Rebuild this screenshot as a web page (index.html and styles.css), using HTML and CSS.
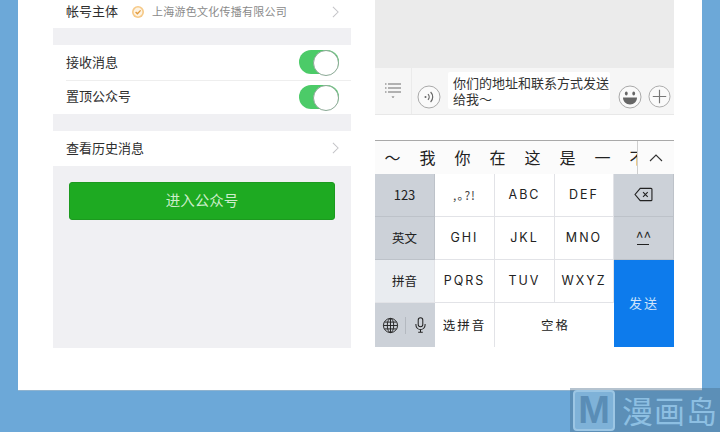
FILE: index.html
```html
<!DOCTYPE html>
<html lang="zh-CN">
<head>
<meta charset="utf-8">
<title>公众号</title>
<link rel="stylesheet" href="styles.css">
</head>
<body>
<div class="page">
  <main class="card">
    <section class="settings">
      <div class="row first">
        <span class="label">帐号主体</span>
        <svg class="badge" viewBox="0 0 14 14"><circle cx="7" cy="7" r="6" fill="#f6c987"/><circle cx="7" cy="7" r="4.4" fill="#fdf3e3"/><path d="M4.6 7l1.8 1.8 3.2-3.4" fill="none" stroke="#e39a3a" stroke-width="1.3"/></svg>
        <span class="company">上海游色文化传播有限公司</span>
        <svg class="chev" viewBox="0 0 8 14"><path d="M1 1l6 6-6 6" fill="none" stroke="#c4c4c8" stroke-width="1.2"/></svg>
      </div>
      <div class="gap"></div>
      <div class="row tall">
        <span class="label">接收消息</span>
        <span class="toggle"></span>
      </div>
      <div class="row tall divided">
        <span class="label">置顶公众号</span>
        <span class="toggle"></span>
      </div>
      <div class="gap"></div>
      <div class="row tall">
        <span class="label">查看历史消息</span>
        <svg class="chev" viewBox="0 0 8 14"><path d="M1 1l6 6-6 6" fill="none" stroke="#c4c4c8" stroke-width="1.2"/></svg>
      </div>
      <button class="enter">进入公众号</button>
    </section>

    <section class="chat">
      <div class="history"></div>
      <div class="inputbar">
        <div class="menu-btn">
          <svg class="menu-icon" viewBox="0 0 18 18"><path d="M1 2h1.5M1 6h1.5M1 10h1.5M4 2h13M4 6h13M4 10h13" stroke="#6d6d6d" stroke-width="1"/><path d="M7.5 14.5h3l-1.5 1.5z" fill="#6d6d6d"/></svg>
        </div>
        <svg class="voice" viewBox="0 0 24 24"><circle cx="12" cy="12" r="11" fill="#fafafa" stroke="#a9a9a9"/><circle cx="8.5" cy="12" r="1" fill="#666"/><path d="M11 9.2a4 4 0 0 1 0 5.6M13.6 7a7 7 0 0 1 0 10" fill="none" stroke="#666" stroke-width="1.2"/></svg>
        <div class="message">你们的地址和联系方式发送给我～</div>
        <svg class="emoji" viewBox="0 0 24 24"><circle cx="12" cy="12" r="11" fill="#fafafa" stroke="#a9a9a9"/><ellipse cx="8.3" cy="8.5" rx="1.4" ry="2" fill="#666"/><ellipse cx="15.7" cy="8.5" rx="1.4" ry="2" fill="#666"/><path d="M5 12.5h14c0 4-3 7-7 7s-7-3-7-7z" fill="#666"/></svg>
        <svg class="plus" viewBox="0 0 24 24"><circle cx="12" cy="12" r="11" fill="#fafafa" stroke="#a9a9a9"/><path d="M12 5v14M5 12h14" stroke="#777" stroke-width="1.2"/></svg>
      </div>
      <div class="spacer"></div>
      <div class="candidates">
        <div class="cand-list">
          <span>～</span><span>我</span><span>你</span><span>在</span><span>这</span><span>是</span><span>一</span><span>不</span>
        </div>
        <div class="cand-more">
          <svg class="caret" viewBox="0 0 14 8"><path d="M1 7l6-6 6 6" fill="none" stroke="#333" stroke-width="1.1"/></svg>
        </div>
      </div>
      <div class="keyboard">
        <div class="key func">123</div>
        <div class="key small">,｡?!</div>
        <div class="key spaced">ABC</div>
        <div class="key spaced">DEF</div>
        <div class="key func">
          <svg class="backspace" viewBox="0 0 20 16"><path d="M6.5 1.5H18a1 1 0 0 1 1 1v11a1 1 0 0 1-1 1H6.5L1 8z" fill="none" stroke="#222" stroke-width="1.2"/><path d="M9.5 5.5l5 5M14.5 5.5l-5 5" stroke="#222" stroke-width="1.2"/></svg>
        </div>
        <div class="key func cjk">英文</div>
        <div class="key spaced">GHI</div>
        <div class="key spaced">JKL</div>
        <div class="key spaced">MNO</div>
        <div class="key func face">^^<i class="underline"></i></div>
        <div class="key light cjk">拼音</div>
        <div class="key spaced">PQRS</div>
        <div class="key spaced">TUV</div>
        <div class="key spaced">WXYZ</div>
        <div class="key send">发送</div>
        <div class="key pair">
          <div class="sub">
            <svg class="globe" viewBox="0 0 18 18"><g fill="none" stroke="#222" stroke-width="1"><circle cx="9" cy="9" r="7.5"/><ellipse cx="9" cy="9" rx="3.4" ry="7.5"/><path d="M9 1.5v15M1.5 9h15M2.6 5.4h12.8M2.6 12.6h12.8"/></g></svg>
          </div>
          <div class="sub">
            <svg class="mic" viewBox="0 0 12 18"><rect x="3.5" y="1" width="5" height="10" rx="2.5" fill="none" stroke="#222" stroke-width="1.1"/><path d="M1 8v1a5 5 0 0 0 10 0V8M6 14v3M3.5 17h5" fill="none" stroke="#222" stroke-width="1.1"/></svg>
          </div>
        </div>
        <div class="key cjk wide-text">选拼音</div>
        <div class="key space cjk wide-text">空格</div>
      </div>
    </section>
  </main>
</div>
<aside class="watermark">
  <span class="logo-m">M</span>
  <span class="logo-text">漫画岛</span>
</aside>
</body>
</html>
```

FILE: styles.css
```css
* { box-sizing: border-box; }
html, body { margin: 0; padding: 0; }
body {
  width: 720px;
  height: 432px;
  overflow: hidden;
  position: relative;
  background: #6ca8d8;
  font-family: "Noto Sans CJK SC", "Liberation Sans", sans-serif;
  color: #2e2e2e;
}
.page { padding: 0 18px; }
.card {
  height: 390px;
  background: #fff;
  padding: 0 28px 42px 35px;
  display: flex;
  gap: 24px;
  box-shadow: 0 1px 0 #8fb3cf;
}
.settings {
  width: 298px;
  background: #f0f0f3;
  display: flex;
  flex-direction: column;
}
.row {
  background: #fff;
  display: flex;
  align-items: center;
  padding: 0 12px 0 13px;
  font-size: 13px;
  flex: none;
}
.first { height: 28px; padding-bottom: 5px; }
.tall { height: 34.5px; }
.divided { position: relative; }
.divided::before {
  content: "";
  position: absolute;
  top: 0;
  left: 13px;
  right: 0;
  height: 1px;
  background: #eeeeee;
}
.gap { height: 17px; flex: none; }
.label { flex: 1; padding-bottom: 2px; }
.first .label { flex: none; width: 65px; }
.badge { width: 14px; height: 14px; flex: none; margin-right: 7px; }
.company { flex: 1; font-size: 11px; letter-spacing: 0.25px; color: #8a8a8a; padding-bottom: 1px; }
.chev { width: 7px; height: 12px; flex: none; }
.toggle {
  width: 40px;
  height: 24px;
  border-radius: 12px;
  background: #4ccb68;
  position: relative;
  flex: none;
}
.toggle::after {
  content: "";
  position: absolute;
  right: 0;
  top: 0;
  width: 24px;
  height: 24px;
  border-radius: 50%;
  background: #fff;
  border: 1px solid #8aa894;
}
.enter {
  margin: 16px 16px 0;
  height: 38px;
  border: 1px solid #1c9a1f;
  border-radius: 3px;
  background: #1eaa22;
  color: #cdeecb;
  font: 14.5px "Noto Sans CJK SC", sans-serif;
  padding: 0 0 2px;
}
.chat {
  width: 299px;
  display: flex;
  flex-direction: column;
  background: #fff;
}
.history { height: 68px; background: #ebebeb; flex: none; }
.inputbar {
  height: 47px;
  flex: none;
  background: #f6f6f6;
  border-bottom: 1px solid #e8e8e8;
  display: flex;
  align-items: center;
}
.menu-btn {
  width: 37px;
  height: 100%;
  flex: none;
  border-right: 1px solid #ebebeb;
  display: flex;
  justify-content: center;
  padding-top: 14px;
}
.menu-icon { width: 18px; height: 18px; }
.voice { width: 24px; height: 24px; margin: 12px 0 0 5px; flex: none; }
.message {
  width: 162px;
  height: 37px;
  flex: none;
  margin: -1px 0 0 7px;
  padding: 3px 0 0 5px;
  background: #fff;
  border-radius: 2px;
  font-size: 13px;
  line-height: 15.5px;
  color: #333;
}
.emoji { width: 24px; height: 24px; margin: 11px 0 0 8px; flex: none; }
.plus { width: 23px; height: 23px; margin: 11px 0 0 6px; flex: none; }
.spacer { height: 25px; flex: none; }
.candidates {
  height: 34px;
  flex: none;
  display: flex;
  border-top: 1px solid #a9a9a9;
  background: #fbfbfb;
}
.cand-list {
  width: 263px;
  overflow: hidden;
  display: flex;
  align-items: center;
  border-right: 1px solid #cfcfcf;
  flex: none;
  padding-bottom: 2px;
}
.cand-list span { width: 35px; flex: none; text-align: center; font-size: 16px; color: #222; }
.cand-more { flex: 1; display: flex; align-items: center; justify-content: center; }
.caret { width: 14px; height: 8px; }
.keyboard {
  height: 173px;
  flex: none;
  display: grid;
  grid-template-columns: 60px 60px 60px 59px 60px;
  grid-template-rows: 43px 43px 43px 44px;
}
.key {
  display: flex;
  align-items: center;
  justify-content: center;
  background: #fff;
  font-size: 13px;
  color: #222;
  border-right: 1px solid #e2e3e7;
  border-bottom: 1px solid #e2e3e7;
  padding-bottom: 1px;
}
.spaced { letter-spacing: 2px; font-family: "Inter", "Liberation Sans", sans-serif; font-size: 12.5px; }
.small { font-size: 12px; letter-spacing: 1px; color: #444; }
.func { background: #ccd1d8; border-color: #bdc2c9; }
.light { background: #e9ecf0; }
.cjk { font-size: 12.5px; }
.wide-text { letter-spacing: 2px; border-bottom: 0; }
.backspace { width: 19px; height: 15px; }
.face { position: relative; font-size: 14px; padding-bottom: 4px; }
.underline {
  position: absolute;
  left: 23px;
  width: 12px;
  top: 27px;
  height: 1px;
  background: #222;
}
.send {
  grid-column: 5;
  grid-row: 3 / span 2;
  background: #0d7bec;
  color: #cfe4fb;
  border: 0;
  letter-spacing: 2px;
  padding-bottom: 2px;
}
.pair {
  background: #ccd1d8;
  padding: 0;
  display: grid;
  grid-template-columns: 31px 29px;
  border: 0;
}
.sub { display: flex; align-items: center; justify-content: center; border-right: 1px solid #b4b9c0; }
.sub + .sub { border-right: 0; }
.globe { width: 17px; height: 17px; }
.mic { width: 11px; height: 18px; }
.space { grid-column: 3 / span 2; border-right: 0; padding-left: 2px; }
.watermark {
  position: absolute;
  left: 570px;
  top: 388px;
  width: 150px;
  height: 44px;
  background: rgba(70, 105, 135, 0.4);
  display: flex;
  align-items: center;
  padding-left: 3px;
  gap: 7px;
}
.logo-m {
  width: 42px;
  height: 41px;
  border-radius: 4px;
  background: #7fb2d8;
  border: 2px solid #9cc6e4;
  color: #5a8db6;
  font: bold 38px/37px "Liberation Sans", sans-serif;
  text-align: center;
  flex: none;
}
.logo-text {
  font-size: 31px;
  line-height: 40px;
  letter-spacing: 1px;
  color: #8dbfe2;
  white-space: nowrap;
}
```
